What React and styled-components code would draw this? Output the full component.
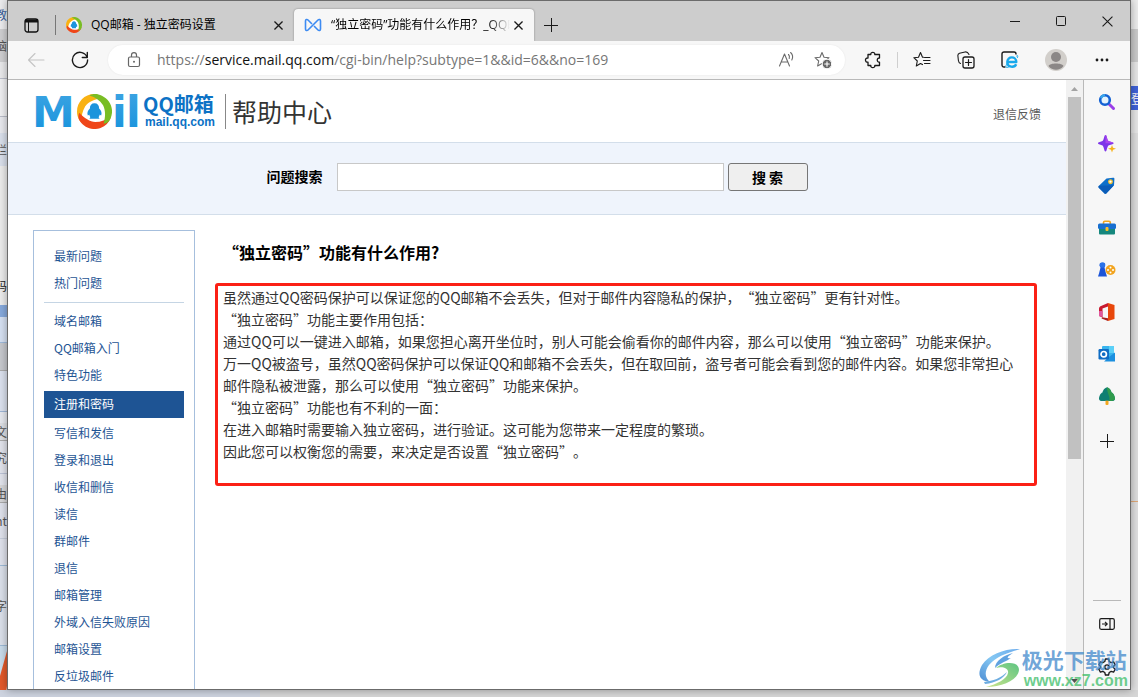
import { useState } from "react";
import styled, { createGlobalStyle } from "styled-components";

const GlobalStyle = createGlobalStyle`
  * {
    box-sizing: border-box;
  }
  body {
    margin: 0;
    font-family: "Noto Sans CJK SC", sans-serif;
    font-size: 12px;
    text-spacing-trim: space-all;
    overflow: hidden;
  }
  button {
    font-family: inherit;
    cursor: pointer;
  }
  svg {
    display: block;
    flex: none;
  }
`;

const Desktop = styled.div`
  position: relative;
  display: grid;
  grid-template-columns: 7px minmax(0, 1fr) 7px;
  grid-template-rows: minmax(0, 1fr) 7px;
  height: 100vh;
  background: #dfdfe0;
`;

const Backdrop = styled.div`
  display: flex;
  flex-direction: column;
  overflow: hidden;
`;

const Strip = styled.div`
  flex: none;
  display: flex;
  align-items: center;
  justify-content: ${(p) => p.$align || "flex-end"};
  height: ${(p) => p.$height}px;
  background: ${(p) => p.$color};
  color: ${(p) => p.$ink || "#555"};
  border-bottom: ${(p) => (p.$line ? `1px solid ${p.$line}` : "none")};
  white-space: nowrap;
`;

const Shade = styled.div`
  grid-column: 1 / 4;
  background: linear-gradient(90deg, #cdd3df 0 260px, #d6d6d6 260px);
`;

const BrowserWindow = styled.div`
  display: flex;
  flex-direction: column;
  min-width: 0;
  border: 1px solid #6b6b6b;
  background: #fff;
  box-shadow: 0 0 8px rgba(0, 0, 0, 0.35);
  z-index: 1;
`;

const TabStrip = styled.div`
  display: flex;
  align-items: flex-end;
  height: 40px;
  background: #cdcdcd;
`;

const TabMenu = styled.button`
  display: flex;
  align-items: center;
  justify-content: center;
  width: 47px;
  height: 32px;
  border: none;
  background: none;
  padding: 0;
`;

const TabDivider = styled.span`
  width: 1px;
  height: 20px;
  margin-bottom: 6px;
  background: #777;
`;

const Tab = styled.div`
  display: flex;
  align-items: center;
  width: ${(p) => (p.$active ? 240 : 238)}px;
  height: 32px;
  padding: 0 8px 0 10px;
  background: ${(p) => (p.$active ? "#f7f7f7" : "none")};
  border-radius: 4px 4px 0 0;
  box-shadow: ${(p) => (p.$active ? "0 0 2px rgba(0, 0, 0, 0.4)" : "none")};
  clip-path: inset(-4px -4px 0 -4px);
`;

const TabTitle = styled.span`
  flex: 1;
  margin-left: 9px;
  overflow: hidden;
  white-space: nowrap;
  font-family: "Open Sans", "Noto Sans CJK SC", sans-serif;
  font-size: 12px;
  line-height: 16px;
  mask-image: ${(p) =>
    p.$fade ? "linear-gradient(90deg, #000 88%, transparent)" : "none"};
`;

const IconButton = styled.button`
  display: flex;
  flex: none;
  align-items: center;
  justify-content: center;
  width: ${(p) => p.$width || 44}px;
  height: ${(p) => p.$height || 30}px;
  padding: 0;
  border: none;
  background: none;
  color: ${(p) => p.$color || "#1a1a1a"};
`;

const WindowButtons = styled.div`
  display: flex;
  align-self: stretch;
  margin-left: auto;
`;

const Toolbar = styled.div`
  display: flex;
  align-items: center;
  height: 39px;
  padding: 0 6px;
  background: #f7f7f7;
  border-bottom: 1px solid #b9b9b9;
`;

const AddressBar = styled.div`
  display: flex;
  flex: 1;
  min-width: 0;
  align-items: center;
  height: 30px;
  margin: 0 6px;
  padding: 0 4px 0 19px;
  border-radius: 15px;
  background: #fff;
  box-shadow: 0 0 2px rgba(0, 0, 0, 0.08);
`;

const Url = styled.span`
  flex: 1;
  margin-left: 16px;
  overflow: hidden;
  white-space: nowrap;
  font-family: "Open Sans", sans-serif;
  font-size: 14px;
  line-height: 20px;
  color: #767676;

  b {
    font-weight: 400;
    color: #111;
  }
`;

const ToolDivider = styled.span`
  width: 1px;
  height: 16px;
  margin: 0 2px;
  background: #cfcfcf;
`;

const Viewport = styled.div`
  display: flex;
  flex: 1;
  min-height: 0;
`;

const Page = styled.div`
  flex: 1;
  min-width: 0;
  overflow: hidden;
  background: #fff;
`;

const PageHeader = styled.header`
  display: flex;
  align-items: center;
  height: 63px;
  padding: 0 25px 0 24px;
  border-bottom: 1px solid #d3deea;
`;

const Brand = styled.div`
  margin-left: 5px;
  color: #0c72c5;
  font-weight: 700;
`;

const BrandName = styled.div`
  font-size: 20px;
  line-height: 22px;
`;

const BrandHost = styled.div`
  padding-left: 2px;
  font-family: "Liberation Sans", sans-serif;
  font-size: 12px;
  line-height: 14px;
`;

const PageTitle = styled.h1`
  margin: 0 0 0 10px;
  padding-left: 6px;
  border-left: 1px solid #888;
  color: #333;
  font-size: 25px;
  font-weight: 400;
  line-height: 35px;
`;

const Feedback = styled.a`
  margin: 6px 0 0 auto;
  color: #595959;
  line-height: 18px;
  text-decoration: none;
`;

const SearchBand = styled.form`
  display: flex;
  align-items: center;
  justify-content: center;
  height: 72px;
  padding-bottom: 3px;
  background: #eff4fc;
  border-bottom: 1px solid #d3deea;
`;

const SearchLabel = styled.label`
  margin-right: 14px;
  padding-bottom: 2px;
  font-size: 14px;
  font-weight: 700;
  line-height: 20px;
`;

const SearchInput = styled.input`
  width: 387px;
  height: 28px;
  margin-right: 4px;
  padding: 0 6px;
  border: 1px solid #c8c8c8;
  font-size: 14px;
`;

const SearchButton = styled.button`
  width: 80px;
  height: 28px;
  padding: 0;
  border: 1px solid #767676;
  border-radius: 3px;
  background: #efefef;
  font-size: 14px;
  font-weight: 700;
`;

const Columns = styled.div`
  display: flex;
  align-items: flex-start;
  gap: 20px;
  padding: 15px 29px 0 25px;
`;

const Nav = styled.nav`
  flex: none;
  width: 162px;
  padding: 12px 10px;
  border: 1px solid #a6bfdd;
`;

const NavGroup = styled.div`
  & + & {
    margin-top: 5px;
    padding-top: 5px;
    border-top: 1px solid #c5d5e4;
  }
`;

const NavLink = styled.a`
  display: block;
  margin: ${(p) => (p.$active ? "2px 0" : 0)};
  padding: 0 10px 2px;
  background: ${(p) => (p.$active ? "#1e5494" : "none")};
  color: ${(p) => (p.$active ? "#fff" : "#1e5494")};
  line-height: 25px;
  text-decoration: none;
`;

const Article = styled.article`
  flex: 1;
  min-width: 0;
`;

const ArticleTitle = styled.h2`
  margin: 10px 0 19px;
  padding-left: 8px;
  font-size: 16px;
  line-height: 24px;
`;

const Answer = styled.div`
  padding: 0 10px 21px 5px;
  border: 3px solid #fb2015;
  border-radius: 3px;
  color: #333;
  font-size: 14px;
  line-height: 22px;

  p {
    margin: 0;
  }
`;

const Scrollbar = styled.div`
  display: flex;
  flex: none;
  flex-direction: column;
  align-items: center;
  width: 17px;
  background: #f1f1f1;
`;

const ScrollTrack = styled.div`
  flex: 1;
  width: 13px;
`;

const ScrollThumb = styled.div`
  height: 63%;
  background: #c1c1c1;
`;

const Sidebar = styled.aside`
  display: flex;
  flex: none;
  flex-direction: column;
  align-items: center;
  width: 47px;
  padding-top: 1px;
  border-left: 1px solid #b9b9b9;
  background: #f7f7f7;
`;

const SidebarBottom = styled.div`
  display: flex;
  flex-direction: column;
  align-items: center;
  width: 28px;
  margin-top: auto;
  padding-top: 2px;
  border-top: 1px solid #b9b9b9;
`;

const Watermark = styled.div`
  position: absolute;
  right: 10px;
  bottom: 7px;
  z-index: 2;
  display: flex;
  align-items: center;
  pointer-events: none;
`;

const WatermarkText = styled.div`
  color: rgba(66, 137, 204, 0.76);
  font-size: 21px;
  font-weight: 700;
  line-height: 26px;
`;

const WatermarkUrl = styled.div`
  padding-left: 2px;
  color: rgba(62, 190, 105, 0.76);
  font-family: "Liberation Sans", sans-serif;
  font-size: 16px;
  font-weight: 700;
  line-height: 18px;
`;

const navGroups = [
  ["最新问题", "热门问题"],
  [
    "域名邮箱",
    "QQ邮箱入门",
    "特色功能",
    "注册和密码",
    "写信和发信",
    "登录和退出",
    "收信和删信",
    "读信",
    "群邮件",
    "退信",
    "邮箱管理",
    "外域入信失败原因",
    "邮箱设置",
    "反垃圾邮件",
  ],
];

const answer = [
  "虽然通过QQ密码保护可以保证您的QQ邮箱不会丢失，但对于邮件内容隐私的保护，“独立密码”更有针对性。",
  "“独立密码”功能主要作用包括：",
  "通过QQ可以一键进入邮箱，如果您担心离开坐位时，别人可能会偷看你的邮件内容，那么可以使用“独立密码”功能来保护。",
  "万一QQ被盗号，虽然QQ密码保护可以保证QQ和邮箱不会丢失，但在取回前，盗号者可能会看到您的邮件内容。如果您非常担心邮件隐私被泄露，那么可以使用“独立密码”功能来保护。",
  "“独立密码”功能也有不利的一面：",
  "在进入邮箱时需要输入独立密码，进行验证。这可能为您带来一定程度的繁琐。",
  "因此您可以权衡您的需要，来决定是否设置“独立密码”。",
];

const leftStrips = [
  { height: 29, color: "#ececee", text: "教", ink: "#3b5f9a" },
  { height: 33, color: "#cfcfd1", text: "脑" },
  { height: 17, color: "#e9e9eb", line: "#b9bcc8" },
  { height: 38, color: "#efeff1", line: "#b9bcc8" },
  { height: 16, color: "#e8e9ee" },
  { height: 33, color: "#d9dfeb", text: "栏" },
  { height: 99, color: "#ececec" },
  { height: 40, color: "#ececec", text: "码", ink: "#222" },
  { height: 12, color: "#86a9dc" },
  { height: 26, color: "#d5e0f2", line: "#9fbadb" },
  { height: 28, color: "#c6c8cd", line: "#aaaaaa" },
  { height: 41, color: "#dbe1ee", line: "#9fb6d6" },
  { height: 11, color: "#e6e8ee" },
  { height: 18, color: "#dddfe4", text: "文", line: "#aaa" },
  { height: 33, color: "#e2e4ec", text: "究", line: "#bcc3d6" },
  { height: 11, color: "#e2e4ec" },
  { height: 18, color: "#d6d6d8", text: "由", line: "#aaa" },
  { height: 36, color: "#dfe2ec", text: "nt", line: "#c6cddb" },
  { height: 27, color: "#dfe2ec", line: "#9dbad6" },
  { height: 80, color: "#dbe0ea", text: "字", line: "#9dbad6" },
];

const CloseIcon = ({ size = 9, width = 1.5 }) => (
  <svg width={size} height={size} viewBox="0 0 10 10" stroke="currentColor" strokeWidth={width}>
    <path d="M0.5 0.5L9.5 9.5M9.5 0.5L0.5 9.5" />
  </svg>
);

const PlusIcon = () => (
  <svg width="14" height="14" stroke="currentColor" fill="none">
    <path d="M7.5 0V14M0 7.5H14" />
  </svg>
);

const RingMark = ({ size }) => {
  const petal =
    "M17 0C7 0 0 8 0 17C0 22 2 26 5 28C4 22 5 17 8 12C11 8 17 5 24 4C22 1 20 0 17 0Z";
  return (
    <svg width={size} height={size} viewBox="0 0 34 34">
      <circle cx="17" cy="17" r="16" fill="#fff" />
      <path d={petal} fill="#f9b213" />
      <path d={petal} fill="#ef4619" transform="rotate(237 17 17)" />
      <path d={petal} fill="#79bd24" transform="rotate(115 17 17)" />
      <path
        d="M17 9C14 9 12.500 11 12.500 14C10.500 16 9.500 18 10.500 21C11 21 12 20 12 20C12 22 14 22.500 12 24H22C20 22.500 22 22 22 20C22 20 23 21 23.500 21C24.500 18 23.500 16 21.500 14C21.500 11 20 9 17 9Z"
        fill="#1c94dc"
      />
    </svg>
  );
};

const Wordmark = () => (
  <svg width="106" height="38" viewBox="0 0 106 38">
    <defs>
      <linearGradient id="sky" x1="0" y1="0" x2="0" y2="1">
        <stop offset="0" stopColor="#3fa5e3" />
        <stop offset="1" stopColor="#1492dc" />
      </linearGradient>
    </defs>
    <g fill="url(#sky)" fontFamily="DejaVu Sans" fontWeight="700" fontSize="43">
      <text x="0" y="35">M</text>
      <text x="80" y="35">i</text>
      <text x="94" y="35">l</text>
    </g>
    <svg x="45" y="2" width="36" height="36">
      <RingMark size={35} />
    </svg>
  </svg>
);

const toolIcon = {
  width: 18,
  height: 18,
  viewBox: "0 0 18 18",
  fill: "none",
  stroke: "currentColor",
  strokeWidth: 1.1,
  strokeLinecap: "round",
  strokeLinejoin: "round",
};

const TabMenuIcon = () => (
  <svg width="15" height="15" viewBox="0 0 15 15" fill="none" stroke="#111">
    <rect x="1" y="1" width="13" height="13" rx="2.5" strokeWidth="1.3" />
    <path d="M1 3H14" strokeWidth="3" />
    <path d="M4.5 4V14" />
  </svg>
);

const LoopIcon = () => (
  <svg width="18" height="14" viewBox="0 0 18 14" fill="none" stroke="#3d8bf2" strokeWidth="1.6" strokeLinejoin="round">
    <path d="M8 6L4 2C3 1 1.500 1.500 1.500 3V11C1.500 12.500 3 13 4 12L14 2C15 1 16.500 1.500 16.500 3V11C16.500 12.500 15 13 14 12L10 8" />
  </svg>
);

const BackIcon = () => (
  <svg {...toolIcon} stroke="#c4c4c4">
    <path d="M17 9H1.500M8 2.500L1.500 9L8 15.500" />
  </svg>
);

const ReloadIcon = () => (
  <svg {...toolIcon} strokeWidth="1.4">
    <path d="M16.200 6.500A7.600 7.600 0 1 0 16.600 9M16.300 1.500V6.500H11.300" />
  </svg>
);

const LockIcon = () => (
  <svg width="14" height="18" viewBox="0 0 14 18" fill="none" stroke="#666" strokeWidth="1.2">
    <rect x="1.500" y="6" width="11" height="9.500" rx="1.500" />
    <path d="M4.500 6V4C4.500 0.700 9.500 0.700 9.500 4V6" />
    <circle cx="7" cy="10.700" r="1" fill="#666" stroke="none" />
  </svg>
);

const ReadAloudIcon = () => (
  <svg {...toolIcon}>
    <path d="M1.500 15L6.500 3L11.500 15M3.200 11H9.800" />
    <path d="M10.500 3.500C11.500 4.500 11.700 6 11.200 7.500M12.600 1.500C14.800 3.500 15 6.500 13.800 9" />
  </svg>
);

const starPath = "M8 1.500L10 6.200L15 6.700L11.300 10L12.300 15L8 12.500L3.600 15L4.700 10L1 6.700L6 6.200Z";

const AddFavoriteIcon = () => (
  <svg {...toolIcon}>
    <path d={starPath} />
    <circle cx="13" cy="13" r="4.800" fill="#666" stroke="#fff" strokeWidth="1" />
    <path d="M13 10.700V15.300M10.700 13H15.300" stroke="#fff" />
  </svg>
);

const ExtensionIcon = () => (
  <svg {...toolIcon} strokeWidth="1.300">
    <path d="M4 3.500H6.800C6.300 0.600 11.300 0.600 10.800 3.500H15.500V7C12.500 6.600 12.500 11.600 15.500 11.200V14.500H10.800C11.300 17.400 6.300 17.400 6.800 14.500H4V11.200C0.600 11.600 0.600 6.600 4 7Z" />
  </svg>
);

const FavoritesIcon = () => (
  <svg {...toolIcon}>
    <path d="M10.500 6.300L9.500 6.200L7.500 1.500L5.500 6.200L0.800 6.700L4.300 10L3.300 15L7.500 12.500L9.500 13.600" />
    <path d="M11.500 6.500H17M10.500 9.500H17M11.500 12.500H17" />
  </svg>
);

const CollectionsIcon = () => (
  <svg {...toolIcon}>
    <rect x="6" y="6" width="11" height="11" rx="2" strokeWidth="1.300" />
    <path d="M11.500 8.500V14.500M8.500 11.500H14.500" strokeWidth="1.200" />
    <path d="M3.500 12.500C2 12 1.600 11 1.400 9.500L0.900 5C0.700 3.500 1.300 2.700 2.500 2.300L8 1C10 0.600 11 1.500 12 3.500" />
  </svg>
);

const IeModeIcon = () => (
  <svg {...toolIcon}>
    <path d="M4 16H3C1.800 16 1 15.200 1 14V3C1 1.800 1.800 1 3 1H13C14.200 1 15 1.800 15 3" strokeWidth="1.400" />
    <g stroke="#18a9ec" fill="none">
      <path d="M6.500 11H15.300C15.300 4.800 6.300 4.800 6.300 11C6.300 16.700 13.500 17 15.200 13.300" strokeWidth="2.400" strokeLinecap="butt" />
      <path d="M15.500 5C16.500 4 17.300 4.300 16.500 6.500M6 12.500C4 16 4.500 17.500 8 15.800" strokeWidth="1" />
    </g>
  </svg>
);

const AvatarIcon = () => (
  <svg width="22" height="22" viewBox="0 0 22 22">
    <circle cx="11" cy="11" r="11" fill="#d2cfcb" />
    <circle cx="11" cy="8" r="5" fill="#8b8786" />
    <path d="M3.500 17C4.500 13.500 17.500 13.500 18.500 17C15 22 7 22 3.500 17Z" fill="#8b8786" />
  </svg>
);

const DotsIcon = () => (
  <svg width="16" height="4" fill="currentColor">
    <circle cx="3" cy="2" r="1.400" />
    <circle cx="8" cy="2" r="1.400" />
    <circle cx="13" cy="2" r="1.400" />
  </svg>
);

const sidebarApps = [
  {
    name: "Search",
    art: (
      <>
        <path d="M11.500 11.500L15.500 15.500" stroke="#9a3fe8" strokeWidth="3" strokeLinecap="round" />
        <circle cx="7" cy="7" r="4.800" fill="#e4f3fc" stroke="#1462d4" strokeWidth="2.600" />
        <path d="M3 5A4.800 4.800 0 0 1 7 2.200" fill="none" stroke="#39a5ea" strokeWidth="2.400" />
      </>
    ),
  },
  {
    name: "Discover",
    art: (
      <>
        <path d="M7.500 0C9 0 9 5 10.500 6C12 7 15.500 7 15.500 8.300C15.500 9.600 12 9.500 10.500 10.600C9 11.700 9 16.500 7.500 16.500C6 16.500 6 11.700 4.500 10.600C3 9.500 0 9.600 0 8.300C0 7 3 7 4.500 6C6 5 6 0 7.500 0Z" fill="#7d35e8" />
        <path d="M7.500 0C9 0 9 5 10.500 6C12 7 15.500 7 15.500 8.300H7.500Z" fill="#a945ee" />
        <path d="M14 10L15 12.800L18 13.800L15 14.800L14 17.600L13 14.800L10 13.800L13 12.800Z" fill="#f7b21b" />
      </>
    ),
  },
  {
    name: "Shopping",
    art: (
      <>
        <path d="M8.500 1.500L15 0.800C16 0.700 16.500 1.200 16.400 2.200L16 8.200L8.500 16.300C7.800 17 7 17 6.300 16.300L1 11C0.300 10.300 0.300 9.500 1 8.800Z" fill="#0d6fca" />
        <path d="M16 8.200L8.500 16.300C7.800 17 7 17 6.300 16.300L1 11C0.300 10.300 0.300 9.500 1 8.800Z" fill="#0b5cb8" />
        <circle cx="12.500" cy="4.700" r="1.800" fill="#fff" stroke="#f7c22f" strokeWidth="1.300" />
      </>
    ),
  },
  {
    name: "Tools",
    art: (
      <>
        <path d="M5.500 5V3.500C5.500 2.700 6 2.300 6.800 2.300H11C11.800 2.300 12.300 2.700 12.300 3.500V5" fill="none" stroke="#f0a51c" strokeWidth="1.600" />
        <rect x="1" y="8" width="16" height="7.500" rx="1" fill="#15877d" />
        <rect x="0" y="4.500" width="18" height="5.500" rx="1.500" fill="#186fd0" />
        <rect x="7.500" y="8" width="3" height="4" rx="1" fill="#fbc02d" />
      </>
    ),
  },
  {
    name: "Games",
    art: (
      <>
        <path d="M2 2H6.500L7 4.500L6.500 6.500L8 12.500L9 15.500H0L1 12.500L2.500 6.500L1.500 4.500Z" fill="#1c55d8" />
        <circle cx="4.500" cy="4" r="2.800" fill="#2a72e8" />
        <circle cx="12.500" cy="9" r="5" fill="#f2a41f" />
        <g fill="#fff">
          <circle cx="12.500" cy="6.500" r="1" />
          <circle cx="12.500" cy="11.500" r="1" />
          <circle cx="10" cy="9" r="1" />
          <circle cx="15" cy="9" r="1" />
        </g>
      </>
    ),
  },
  {
    name: "Office",
    art: (
      <>
        <path d="M10 0L16.500 2V16L10 18Z" fill="#e8470b" />
        <path d="M10 0L3 3C1.500 3.700 1 4.500 1 6V13L4.500 14.500V5.500L10 3.500Z" fill="#c8192f" />
        <path d="M1 8V13L4.500 14V8Z" fill="#e0579d" />
        <path d="M4 14.300L10 15.300V18L3.600 15.500Z" fill="#a92020" />
      </>
    ),
  },
  {
    name: "Outlook",
    art: (
      <>
        <rect x="4" y="1" width="12" height="12" rx="1" fill="#38b4ee" />
        <path d="M11 1H16V8H11Z" fill="#5bd0f8" />
        <path d="M6 16.500H17V7.500L11 12Z" fill="#1b8fdf" />
        <rect x="0.500" y="4" width="10.500" height="10.500" rx="1.200" fill="#0f6cc4" />
        <circle cx="5.700" cy="9.200" r="2.700" fill="none" stroke="#fff" strokeWidth="1.700" />
      </>
    ),
  },
  {
    name: "Drop",
    art: (
      <>
        <rect x="7.500" y="12" width="3" height="6" rx="1" fill="#f3a81f" />
        <path d="M9 0.500C7 0.500 5 3 4.500 5.500C2.500 6 1 9.500 1 12C1.500 14.500 5 14.500 9 13.500C13 14.500 16.500 14.500 17 12C17 9.500 15.500 6 13.500 5.500C13 3 11 0.500 9 0.500Z" fill="#0f7f72" />
        <path d="M9 0.500C11 0.500 13 3 13.500 5.500C15.500 6 17 9.500 17 12C16 14 13 14.300 11 13.800C13 10 9 7 9 0.500Z" fill="#2f9b4c" />
      </>
    ),
  },
];

const PanelIcon = () => (
  <svg width="16" height="12" viewBox="0 0 16 12" fill="none" stroke="currentColor" strokeWidth="1.200">
    <rect x="0.700" y="0.700" width="14.600" height="10.600" rx="1.500" />
    <path d="M11 1V11M3 6H8M6 3.800L8.200 6L6 8.200" />
  </svg>
);

const GearIcon = () => (
  <svg {...toolIcon} strokeWidth="1.300">
    <circle cx="9" cy="9" r="2.200" />
    <path d="M7.400 1H10.600L11.200 3.500L13.200 4.600L15.600 3.900L17.200 6.700L15.400 8.400V9.600L17.200 11.300L15.600 14.100L13.200 13.400L11.200 14.500L10.600 17H7.400L6.800 14.500L4.800 13.400L2.400 14.100L0.800 11.300L2.600 9.600V8.400L0.800 6.700L2.400 3.900L4.800 4.600L6.800 3.500Z" />
  </svg>
);

const SwirlMark = () => (
  <svg width="43" height="40" viewBox="0 0 43 40">
    <defs>
      <linearGradient id="swirlBlue" x1="1" y1="0" x2="0" y2="1">
        <stop offset="0" stopColor="#5aa2ea" />
        <stop offset="0.5" stopColor="#74c0f2" />
        <stop offset="1" stopColor="#367fce" />
      </linearGradient>
      <linearGradient id="swirlGreen" x1="0" y1="1" x2="1" y2="0">
        <stop offset="0" stopColor="#c4e07b" />
        <stop offset="1" stopColor="#49bd72" />
      </linearGradient>
    </defs>
    <g opacity="0.88">
      <path d="M41 1C27 0 10 6 3 17C-2 26 0 33 11 34C6 30 5 24 10 17C17 8 29 5 41 1Z" fill="url(#swirlBlue)" />
      <path d="M34 5C25 7 16 13 16 20C21 15 28 13 32 10C26 11 29 8 34 5Z" fill="#4b96dc" />
      <path d="M17 20C23 14 40 12 40 22C39 32 24 39 7 39C18 36 28 31 29 25C30 20 23 18 17 20Z" fill="url(#swirlGreen)" />
      <path d="M6 36C17 35 25 30 28 24C22 30 14 33 5 34Z" fill="#5aa2dc" />
    </g>
  </svg>
);

const ScrollArrow = ({ down }) => (
  <svg width="17" height="17" viewBox="0 0 17 17" fill={down ? "#505050" : "#a3a3a3"}>
    <path d={down ? "M5 7H12L8.500 11Z" : "M5 11H12L8.500 7Z"} />
  </svg>
);

const App = () => {
  const [query, setQuery] = useState("");
  const [current, setCurrent] = useState("注册和密码");

  const handleNav = (e, item) => {
    e.preventDefault();
    setCurrent(item);
  };

  return (
    <Desktop>
      <GlobalStyle />
      <Backdrop>
        {leftStrips.map((s, i) => (
          <Strip key={i} $height={s.height} $color={s.color} $line={s.line} $ink={s.ink}>
            {s.text}
          </Strip>
        ))}
        <svg width="7" height="60" viewBox="0 0 7 60">
          <rect width="7" height="60" fill="#c9dcec" />
          <path d="M7 5V40L4 60H0V30Z" fill="#e2592b" />
        </svg>
      </Backdrop>

      <BrowserWindow>
        <TabStrip>
          <TabMenu aria-label="Tab actions">
            <TabMenuIcon />
          </TabMenu>
          <TabDivider />
          <Tab>
            <RingMark size={16} />
            <TabTitle>QQ邮箱 - 独立密码设置</TabTitle>
            <IconButton $width={16} aria-label="Close tab">
              <CloseIcon />
            </IconButton>
          </Tab>
          <Tab $active>
            <LoopIcon />
            <TabTitle $fade>“独立密码”功能有什么作用？_QQ邮箱</TabTitle>
            <IconButton $width={16} aria-label="Close tab">
              <CloseIcon />
            </IconButton>
          </Tab>
          <IconButton $width={34} $height={32} aria-label="New tab">
            <PlusIcon />
          </IconButton>
          <WindowButtons>
            <IconButton $width={46} $height={40} aria-label="Minimize">
              <svg width="10" height="10" stroke="currentColor">
                <path d="M0 5.500H10" />
              </svg>
            </IconButton>
            <IconButton $width={46} $height={40} aria-label="Maximize">
              <svg width="10" height="10" stroke="currentColor" fill="none">
                <rect x="0.500" y="0.500" width="9" height="9" rx="1" />
              </svg>
            </IconButton>
            <IconButton $width={46} $height={40} aria-label="Close">
              <CloseIcon size={11} width={1} />
            </IconButton>
          </WindowButtons>
        </TabStrip>

        <Toolbar>
          <IconButton aria-label="Back">
            <BackIcon />
          </IconButton>
          <IconButton aria-label="Refresh">
            <ReloadIcon />
          </IconButton>
          <AddressBar>
            <LockIcon />
            <Url>
              https://<b>service.mail.qq.com</b>/cgi-bin/help?subtype=1&&id=6&&no=169
            </Url>
            <IconButton $width={36} $color="#6b6b6b" aria-label="Read aloud">
              <ReadAloudIcon />
            </IconButton>
            <IconButton $width={36} $color="#6b6b6b" aria-label="Add to favorites">
              <AddFavoriteIcon />
            </IconButton>
          </AddressBar>
          <IconButton aria-label="Extensions">
            <ExtensionIcon />
          </IconButton>
          <ToolDivider />
          <IconButton aria-label="Favorites">
            <FavoritesIcon />
          </IconButton>
          <IconButton aria-label="Collections">
            <CollectionsIcon />
          </IconButton>
          <IconButton aria-label="Internet Explorer mode">
            <IeModeIcon />
          </IconButton>
          <IconButton $width={48} aria-label="Profile">
            <AvatarIcon />
          </IconButton>
          <IconButton aria-label="Settings and more">
            <DotsIcon />
          </IconButton>
        </Toolbar>

        <Viewport>
          <Page>
            <PageHeader>
              <Wordmark />
              <Brand>
                <BrandName>QQ邮箱</BrandName>
                <BrandHost>mail.qq.com</BrandHost>
              </Brand>
              <PageTitle>帮助中心</PageTitle>
              <Feedback href="#feedback">退信反馈</Feedback>
            </PageHeader>

            <SearchBand onSubmit={(e) => e.preventDefault()}>
              <SearchLabel htmlFor="question">问题搜索</SearchLabel>
              <SearchInput
                id="question"
                value={query}
                onChange={(e) => setQuery(e.target.value)}
              />
              <SearchButton type="submit">搜 索</SearchButton>
            </SearchBand>

            <Columns>
              <Nav>
                {navGroups.map((group) => (
                  <NavGroup key={group[0]}>
                    {group.map((item) => (
                      <NavLink
                        key={item}
                        href="#help"
                        $active={item === current}
                        onClick={(e) => handleNav(e, item)}
                      >
                        {item}
                      </NavLink>
                    ))}
                  </NavGroup>
                ))}
              </Nav>
              <Article>
                <ArticleTitle>“独立密码”功能有什么作用?</ArticleTitle>
                <Answer>
                  {answer.map((line) => (
                    <p key={line}>{line}</p>
                  ))}
                </Answer>
              </Article>
            </Columns>
          </Page>

          <Scrollbar>
            <ScrollArrow />
            <ScrollTrack>
              <ScrollThumb />
            </ScrollTrack>
            <ScrollArrow down />
          </Scrollbar>

          <Sidebar>
            {sidebarApps.map((app) => (
              <IconButton key={app.name} $height={42} aria-label={app.name}>
                <svg width="18" height="18" viewBox="0 0 18 18">
                  {app.art}
                </svg>
              </IconButton>
            ))}
            <IconButton $height={48} aria-label="Add">
              <PlusIcon />
            </IconButton>
            <SidebarBottom>
              <IconButton $height={42} aria-label="Hide sidebar">
                <PanelIcon />
              </IconButton>
              <IconButton $height={44} aria-label="Settings">
                <GearIcon />
              </IconButton>
            </SidebarBottom>
          </Sidebar>
        </Viewport>
      </BrowserWindow>

      <Backdrop>
        <Strip $height={29} $color="#ececec" />
        <Strip $height={33} $color="#cacaca" />
        <Strip $height={24} $color="#e6e6e6" />
        <Strip $height={24} $color="#3f62d8" $ink="#fff" $align="flex-start">
          登
        </Strip>
        <Strip $height={23} $color="#e6e6e6" />
        <Strip $height={369} $color="#dddddd" $line="#e0a878" />
      </Backdrop>
      <Shade />

      <Watermark>
        <SwirlMark />
        <div>
          <WatermarkText>极光下载站</WatermarkText>
          <WatermarkUrl>www.xz7.com</WatermarkUrl>
        </div>
      </Watermark>
    </Desktop>
  );
};

export default App;
